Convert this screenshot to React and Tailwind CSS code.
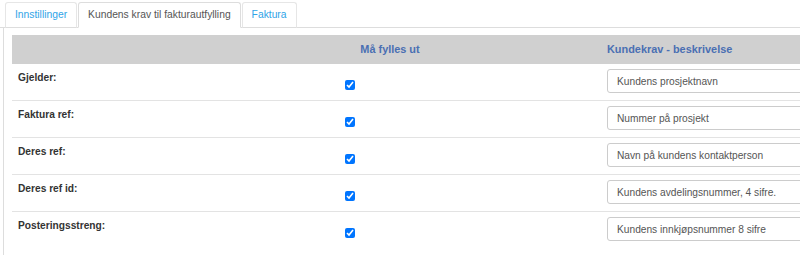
import React from "react";

const rows = [
    { label: "Gjelder:", value: "Kundens prosjektnavn" },
    { label: "Faktura ref:", value: "Nummer på prosjekt" },
    { label: "Deres ref:", value: "Navn på kundens kontaktperson" },
    { label: "Deres ref id:", value: "Kundens avdelingsnummer, 4 sifre." },
    { label: "Posteringsstreng:", value: "Kundens innkjøpsnummer 8 sifre" },
];

const tabs = [
    { name: "Innstillinger", active: false },
    { name: "Kundens krav til fakturautfylling", active: true },
    { name: "Faktura", active: false },
];

const App = () => {
    return (
        <div className="w-full h-[255px] overflow-hidden bg-white font-['Liberation_Sans',Arial,sans-serif]">
            <div className="flex gap-[1px] pl-[5px] pt-[2px] border-b border-[#dddddd]">
                {tabs.map((tab) => (
                    <div
                        key={tab.name}
                        className={
                            tab.active
                                ? "h-[26px] -mb-px flex items-center px-[9px] rounded-t-[3px] border border-[#dddddd] border-b-white bg-white text-[10.3px] text-[#555555]"
                                : "h-[26px] -mb-px flex items-center px-[9px] rounded-t-[3px] border border-[#e6e6e6] border-b-[#dddddd] bg-white text-[10.3px] text-[#2fa4e7]"
                        }
                    >
                        {tab.name}
                    </div>
                ))}
            </div>

            <div className="ml-[3px] border-l border-[#dddddd] pl-[8px] pt-[7px] h-[240px]">
                <div className="w-[900px]">
                    <div className="grid grid-cols-[327px_102px_1fr] h-[29px] items-center bg-[#d0d0d0] text-[10.9px] font-bold text-[#4a6fb3]">
                        <div />
                        <div className="text-center">Må fylles ut</div>
                        <div className="pl-[166px]">Kundekrav - beskrivelse</div>
                    </div>

                    {rows.map((row) => (
                        <div
                            key={row.label}
                            className="grid grid-cols-[327px_102px_1fr] h-[37px] border-b border-[#e3e3e3] last:border-b-0"
                        >
                            <div className="pl-[6px] pt-[6px] text-[10.2px] leading-[15px] font-bold text-[#333333]">
                                {row.label}
                            </div>
                            <div className="pl-[6px] pt-[16px]">
                                <input
                                    type="checkbox"
                                    defaultChecked
                                    className="block m-0 w-[10px] h-[10px] accent-[#0075ff]"
                                />
                            </div>
                            <div className="pl-[166px] pt-[5px]">
                                <input
                                    type="text"
                                    readOnly
                                    value={row.value}
                                    className="block w-[230px] h-[24px] px-[9px] rounded-[3px] border border-[#cccccc] bg-white text-[10.2px] text-[#555555] outline-none"
                                />
                            </div>
                        </div>
                    ))}
                </div>
            </div>
        </div>
    );
};

export default App;
